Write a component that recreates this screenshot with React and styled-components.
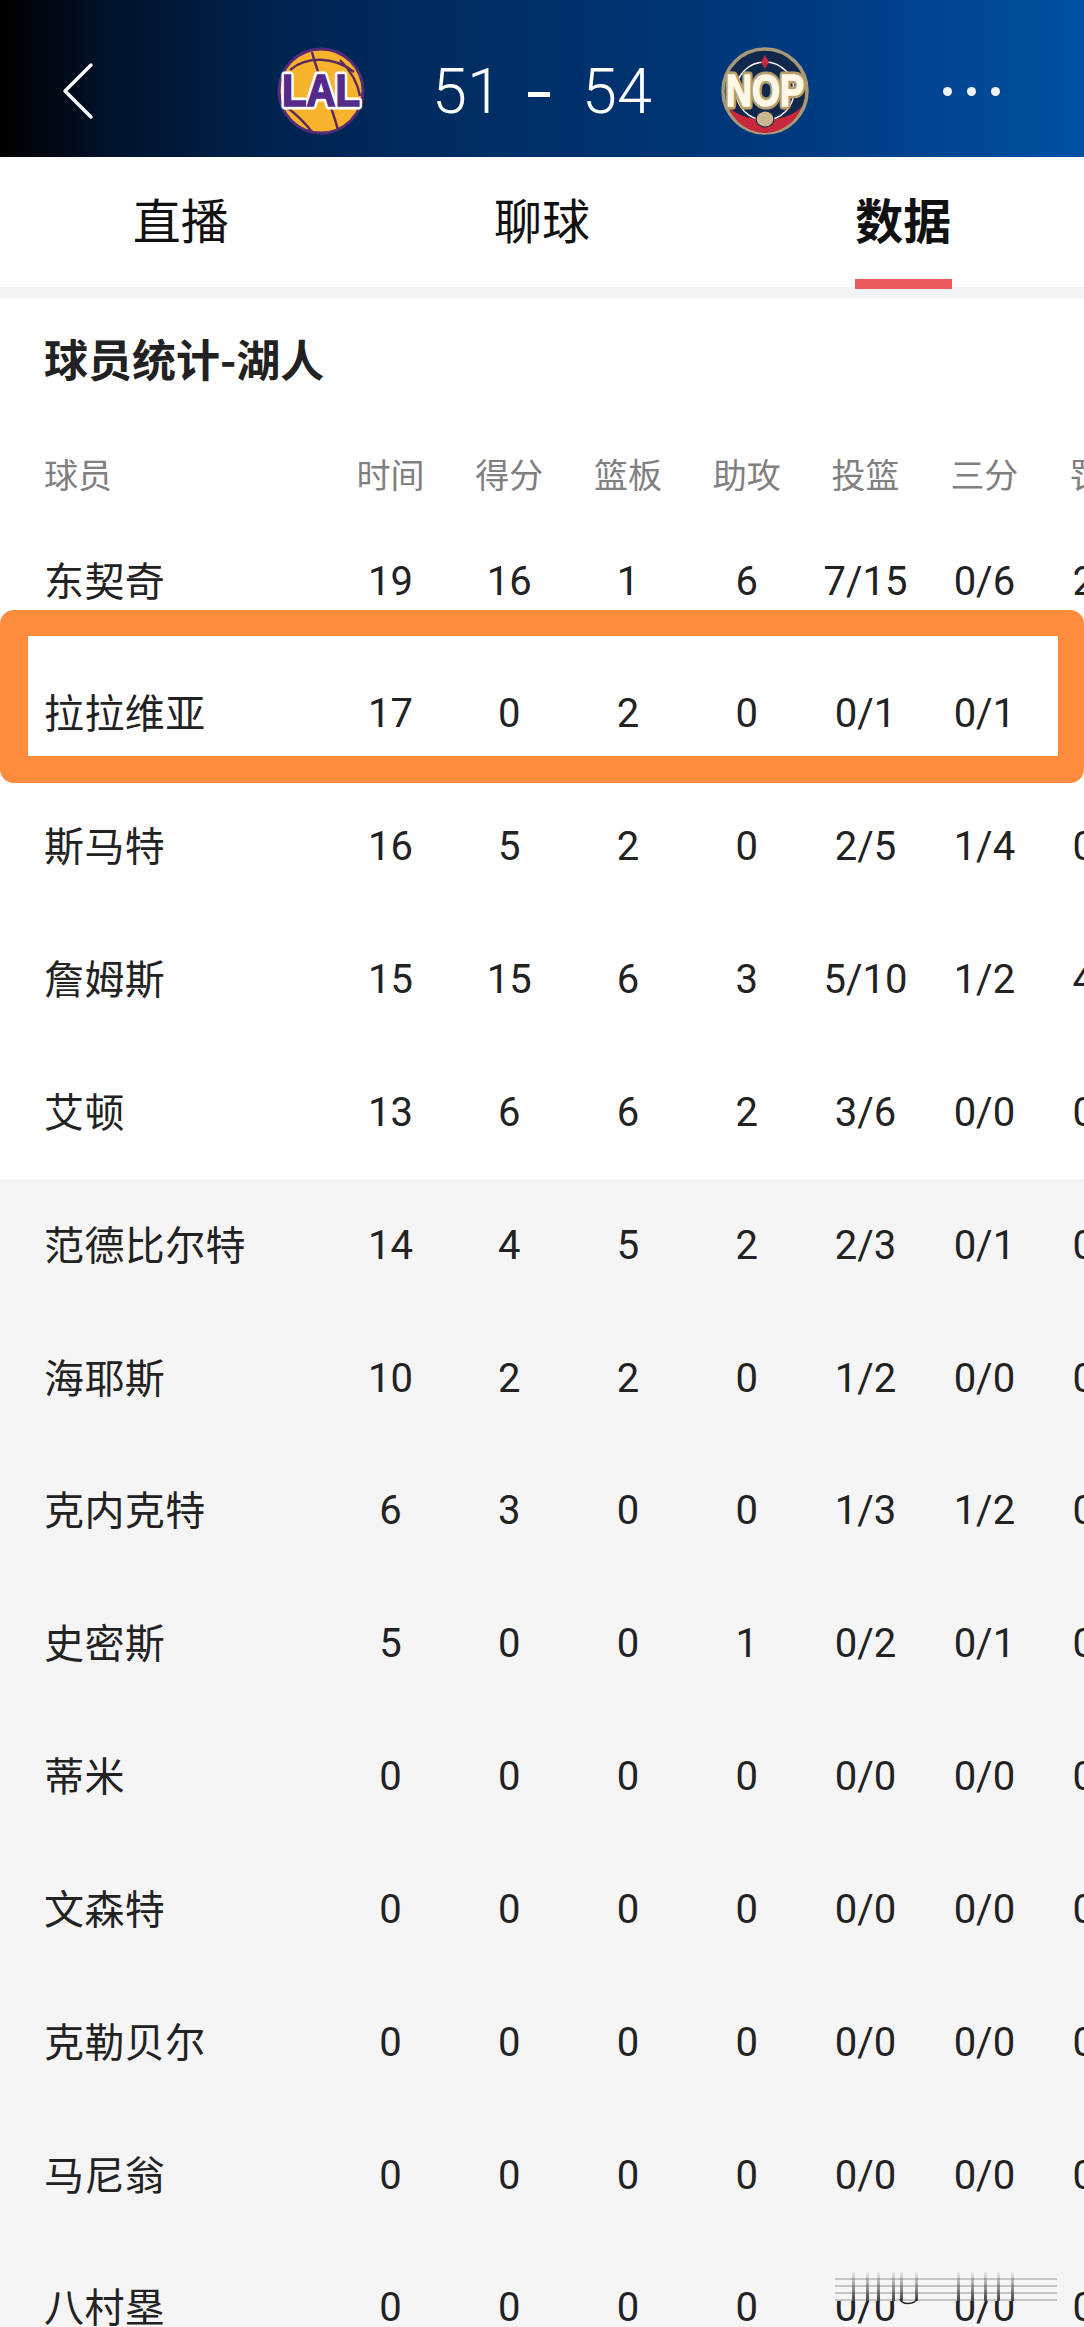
import styled, { createGlobalStyle } from "styled-components";

const GlobalStyle = createGlobalStyle`
  html, body {
    margin: 0;
    padding: 0;
    background: #fff;
  }
`;

const Page = styled.div`
  position: relative;
  width: 1084px;
  height: 2327px;
  overflow: hidden;
  background: #fff;
  font-family: Roboto, "Noto Sans CJK SC", sans-serif;
`;

const Header = styled.header`
  height: 157px;
  box-sizing: border-box;
  padding: 25px 84px 0 62px;
  display: flex;
  align-items: center;
  background: linear-gradient(90deg, #000 0%, #00122b 10%, #00234f 25%, #002e66 45%, #003473 62%, #003f88 80%, #0051a3 100%);
`;

const BackIcon = styled.svg`
  width: 32px;
  height: 58px;
  margin-right: 182px;
  flex-shrink: 0;
`;

const ScoreBoard = styled.div`
  display: flex;
  align-items: center;
`;

const Logo = styled.svg`
  width: 90px;
  height: 90px;
  flex-shrink: 0;
  overflow: visible;
`;

const Score = styled.div`
  width: 220px;
  margin: 0 68px 0 66px;
  display: flex;
  justify-content: space-between;
  align-items: center;
  color: #fff;
  font-size: 63px;
  font-weight: 300;
  line-height: 1;
`;

const Dash = styled.span`
  width: 22px;
  height: 5px;
  margin: 6px 6px 0 0;
  background: #fff;
`;

const MoreDots = styled.div`
  margin-left: auto;
  display: flex;
  gap: 15px;
`;

const Dot = styled.span`
  width: 9px;
  height: 9px;
  border-radius: 50%;
  background: #f2f5fa;
`;

const Tabs = styled.nav`
  height: 130px;
  display: flex;
  border-bottom: 11px solid #f2f3f5;
`;

const Tab = styled.div`
  position: relative;
  flex: 1;
  display: flex;
  justify-content: center;
  align-items: center;
  padding-bottom: 9px;
  font-family: "Noto Sans CJK SC", sans-serif;
  font-size: 48px;
  font-weight: ${(props) => (props.$active ? 700 : 400)};
  color: #111;

  &::after {
    content: "";
    display: ${(props) => (props.$active ? "block" : "none")};
    position: absolute;
    left: 50%;
    bottom: -2px;
    width: 97px;
    height: 10px;
    margin-left: -48px;
    background: #ea5a5c;
  }
`;

const Title = styled.h2`
  margin: 0;
  padding: 30px 44px 0;
  height: 63px;
  font-family: "Noto Sans CJK SC", sans-serif;
  font-size: 44px;
  line-height: 60px;
  font-weight: 700;
  color: #222;
`;

const Row = styled.div`
  position: relative;
  z-index: ${(props) => (props.$marked ? 1 : "auto")};
  display: grid;
  grid-template-columns: 331px repeat(7, 118.8px);
  align-items: center;
  height: ${(props) => (props.$head ? "82.6px" : "132.85px")};
  padding-top: ${(props) => (props.$head ? "41px" : "0")};
  background: ${(props) => (props.$bench ? "#f5f5f5" : "#fff")};
  color: ${(props) => (props.$head ? "#808080" : "#222")};
  font-size: ${(props) => (props.$head ? "34px" : "40px")};

  &::after {
    content: "";
    display: ${(props) => (props.$marked ? "block" : "none")};
    position: absolute;
    left: 0;
    right: 0;
    top: -37px;
    bottom: -3px;
    box-sizing: border-box;
    border-style: solid;
    border-color: #ff8b3c;
    border-width: 26px 26px 27px 28px;
    border-radius: 14px;
  }
`;

const Name = styled.div`
  padding-left: 44px;
  padding-bottom: ${(props) => (props.$head ? "0" : "5px")};
  font-family: "Noto Sans CJK SC", sans-serif;
  font-size: ${(props) => (props.$head ? "34px" : "40px")};
  letter-spacing: ${(props) => (props.$head ? "0" : "0.4px")};
  white-space: nowrap;
`;

const Cell = styled.div`
  text-align: center;
  white-space: nowrap;
`;

const HeadCell = styled(Cell)`
  font-family: "Noto Sans CJK SC", sans-serif;
`;

const Watermark = styled.svg`
  position: absolute;
  z-index: 2;
  left: 830px;
  top: 2268px;
  width: 240px;
  height: 40px;
`;

const columns = ["时间", "得分", "篮板", "助攻", "投篮", "三分", "罚球"];

const zero = [0, 0, 0, 0, "0/0", "0/0", "0/0"];

const players = [
  ["东契奇", 19, 16, 1, 6, "7/15", "0/6", "2/2"],
  ["拉拉维亚", 17, 0, 2, 0, "0/1", "0/1", "0/0"],
  ["斯马特", 16, 5, 2, 0, "2/5", "1/4", "0/0"],
  ["詹姆斯", 15, 15, 6, 3, "5/10", "1/2", "4/4"],
  ["艾顿", 13, 6, 6, 2, "3/6", "0/0", "0/0"],
  ["范德比尔特", 14, 4, 5, 2, "2/3", "0/1", "0/0"],
  ["海耶斯", 10, 2, 2, 0, "1/2", "0/0", "0/0"],
  ["克内克特", 6, 3, 0, 0, "1/3", "1/2", "0/0"],
  ["史密斯", 5, 0, 0, 1, "0/2", "0/1", "0/0"],
  ["蒂米", ...zero],
  ["文森特", ...zero],
  ["克勒贝尔", ...zero],
  ["马尼翁", ...zero],
  ["八村塁", ...zero],
];

// team code drawn twice: outline underneath, heavy letters on top
const LogoCode = ({ fill, outline, children }) => (
  <g
    textAnchor="middle"
    fontFamily="Liberation Sans, sans-serif"
    fontWeight="700"
    fontSize="44"
  >
    <text x="45" y="60" textLength="78" lengthAdjust="spacingAndGlyphs" fill={outline} stroke={outline} strokeWidth="7" strokeLinejoin="round">
      {children}
    </text>
    <text x="45" y="60" textLength="78" lengthAdjust="spacingAndGlyphs" fill={fill} stroke={fill} strokeWidth="1.6">
      {children}
    </text>
  </g>
);

const LakersLogo = () => (
  <Logo viewBox="0 0 90 90">
    <circle cx="45" cy="45" r="42" fill="#f7b32b" stroke="#552a78" strokeWidth="3" />
    <g fill="none" stroke="#5a2a5e" strokeWidth="2.4">
      <path d="M14 24 C30 10 58 10 78 26" />
      <path d="M36 6 C42 30 56 60 62 84" />
      <path d="M12 62 C22 70 30 78 36 86" />
      <path d="M64 14 C76 26 82 38 84 50" />
    </g>
    <LogoCode fill="#552a8a" outline="#fff">LAL</LogoCode>
  </Logo>
);

const PelicansLogo = () => (
  <Logo viewBox="0 0 90 90">
    <circle cx="45" cy="45" r="42" fill="#10284c" stroke="#a89a78" strokeWidth="3.5" />
    <path d="M8 60 C22 78 68 78 82 60 C74 82 54 87 45 87 C36 87 16 82 8 60Z" fill="#c8283c" />
    <circle cx="45" cy="45" r="29" fill="none" stroke="#fff" strokeWidth="1.4" />
    <path d="M45 9 l4 7 l-4 7 l-4 -7Z" fill="#c8283c" />
    <ellipse cx="45" cy="73" rx="9" ry="8" fill="#c9b88f" stroke="#10284c" strokeWidth="1.2" />
    <LogoCode fill="#fff8e6" outline="#b59f6a">NOP</LogoCode>
  </Logo>
);

const smearX = [22, 36, 47, 62, 70, 85, 127, 141, 154, 167, 181];
const smearY = [10, 17, 24, 31];

const App = () => {
  return (
    <Page>
      <GlobalStyle />
      <Header>
        <BackIcon viewBox="0 0 32 58">
          <path d="M29 3 L3 29 L29 55" fill="none" stroke="#fff" strokeWidth="3.4" strokeLinecap="round" strokeLinejoin="round" />
        </BackIcon>
        <ScoreBoard>
          <LakersLogo />
          <Score>
            <span>51</span>
            <Dash />
            <span>54</span>
          </Score>
          <PelicansLogo />
        </ScoreBoard>
        <MoreDots>
          <Dot />
          <Dot />
          <Dot />
        </MoreDots>
      </Header>
      <Tabs>
        <Tab>直播</Tab>
        <Tab>聊球</Tab>
        <Tab $active>数据</Tab>
      </Tabs>
      <Title>球员统计-湖人</Title>
      <Row $head>
        <Name $head>球员</Name>
        {columns.map((column) => (
          <HeadCell key={column}>{column}</HeadCell>
        ))}
      </Row>
      {players.map(([name, ...stats], index) => (
        <Row key={name} $bench={index >= 5} $marked={index === 1}>
          <Name>{name}</Name>
          {stats.map((stat, statIndex) => (
            <Cell key={statIndex}>{stat}</Cell>
          ))}
        </Row>
      ))}
      <Watermark viewBox="0 0 240 40">
        <defs>
          <linearGradient id="smear" x1="0" y1="0" x2="0" y2="1">
            <stop offset="0" stopColor="#333" stopOpacity="0.05" />
            <stop offset="1" stopColor="#222" stopOpacity="0.85" />
          </linearGradient>
        </defs>
        <rect x="4" y="0" width="226" height="33" fill="#f5f5f5" />
        {smearX.map((x) => (
          <rect key={x} x={x} y="4" width="3" height="29" fill="url(#smear)" />
        ))}
        {smearY.map((y) => (
          <rect key={y} x="5" y={y} width="222" height="2" fill="#555" opacity="0.3" />
        ))}
        <path d="M70 31 C72 37 84 37 87 31" fill="none" stroke="#222" strokeWidth="1.5" />
      </Watermark>
    </Page>
  );
};

export default App;
